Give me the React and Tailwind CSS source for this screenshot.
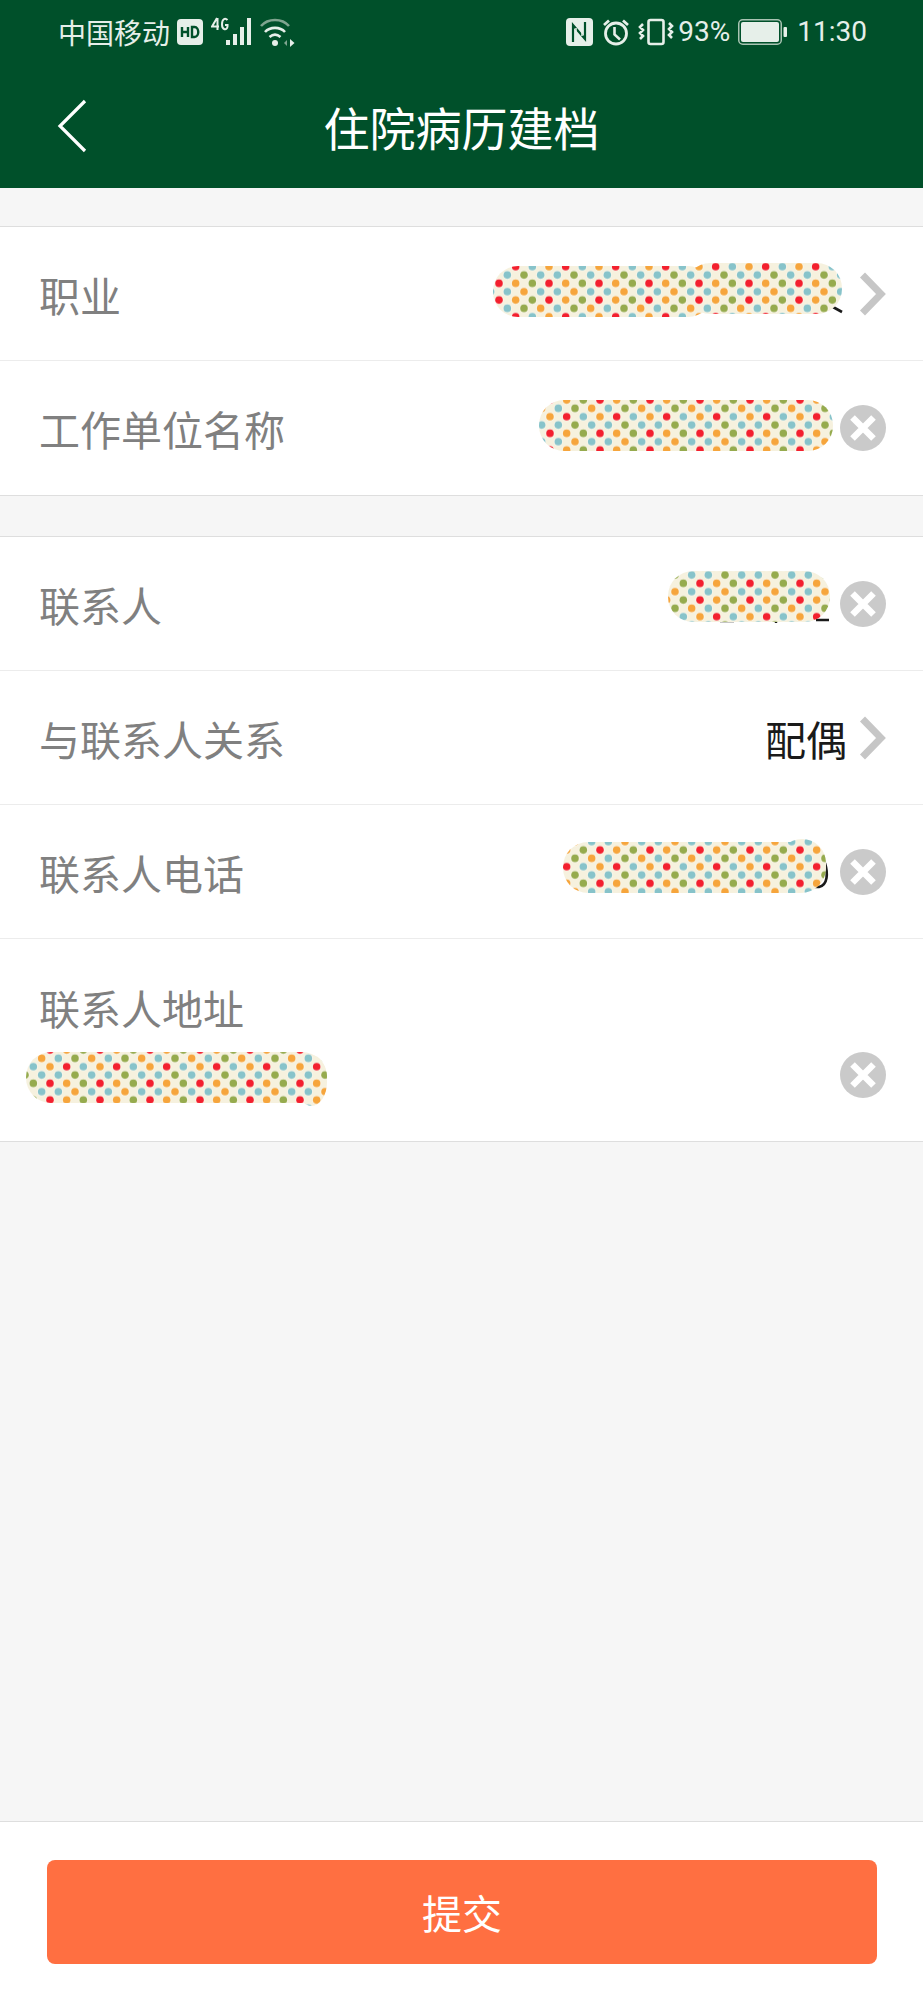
const cjk = { fontFamily: '"Noto Sans CJK SC", "Noto Sans", sans-serif' };

const C = { R: '#f3202e', O: '#f6a53c', G: '#96ab4e', B: '#87c3ca' };
const DOTS = [
  [0, 0, 'O'], [16.67, 0, 'R'], [33.33, 0, 'B'],
  [8.33, 8.33, 'B'], [25, 8.33, 'G'], [41.67, 8.33, 'B'],
  [0, 16.67, 'R'], [16.67, 16.67, 'O'], [33.33, 16.67, 'G'],
  [8.33, 25, 'B'], [25, 25, 'O'], [41.67, 25, 'B'],
  [0, 33.33, 'R'], [16.67, 33.33, 'O'], [33.33, 33.33, 'G'],
  [8.33, 41.67, 'B'], [25, 41.67, 'G'], [41.67, 41.67, 'O'],
];

// x, y = where the strip sits on the page, so that all strips share one dot grid
function Pill({ id, x, y, w, h, shapes, className, children }) {
  const tile = [];
  DOTS.forEach(([dx, dy, c]) => {
    [0, 50].forEach((ox) => {
      [0, 50].forEach((oy) => {
        tile.push(<circle key={`h${dx}-${dy}-${ox}-${oy}`} cx={dx + ox} cy={dy + oy} r="4.6" fill="#fbf8ee" />);
        tile.push(<circle key={`d${dx}-${dy}-${ox}-${oy}`} cx={dx + ox} cy={dy + oy} r="3.8" fill={C[c]} />);
      });
    });
  });
  return (
    <svg width={w} height={h} viewBox={`0 0 ${w} ${h}`} className={className}>
      <defs>
        <pattern id={id} width="50" height="50" patternUnits="userSpaceOnUse" patternTransform={`translate(${-x} ${16.67 - y})`}>
          <rect width="50" height="50" fill="#f6f1de" />
          {tile}
        </pattern>
      </defs>
      {children}
      {shapes.map((s, i) => (
        <rect key={i} x={s[0]} y={s[1]} width={s[2]} height={s[3]} rx={s[4]} fill={`url(#${id})`} />
      ))}
    </svg>
  );
}

function Chevron({ className }) {
  return (
    <svg width="27" height="44" viewBox="0 0 27 44" className={className}>
      <path d="M3.5 3 L22 22 L3.5 41" fill="none" stroke="#c6c6c6" strokeWidth="7" />
    </svg>
  );
}

function Clear({ className }) {
  return (
    <svg width="46" height="46" viewBox="0 0 46 46" className={className}>
      <circle cx="23" cy="23" r="23" fill="#cacaca" />
      <path d="M12.5 12.5 L33.5 33.5 M33.5 12.5 L12.5 33.5" stroke="#fff" strokeWidth="6.5" />
    </svg>
  );
}

function Label({ children }) {
  return <span className="text-[41px] leading-[56px] text-[#808080]" style={cjk}>{children}</span>;
}

function Row({ h, children, last }) {
  return (
    <div className={`flex justify-between items-center pl-[39px] pr-[37px] ${h} bg-white ${last ? '' : 'border-b border-[#ececec]'}`}>
      {children}
    </div>
  );
}

function StatusBar() {
  return (
    <div className="flex justify-between items-center h-[60px] pt-[4px] pl-[58px] pr-[56px] text-[#e6efe9]">
      <div className="flex items-center">
        <span className="text-[28px] leading-[34px]" style={cjk}>中国移动</span>
        <svg width="26" height="26" viewBox="0 0 26 26" className="ml-[7px]">
          <rect width="26" height="26" rx="4" fill="#e6efe9" />
          <path d="M5 8v10M11 8v10M5 13h6M15 8v10h2.5c5 0 5-10 0-10z" fill="none" stroke="#00502a" strokeWidth="2.4" />
        </svg>
        <svg width="84" height="30" viewBox="0 0 84 30" className="ml-[8px]">
          <path d="M6 1 L1 9.5 H8 M6.5 1v12" fill="none" stroke="#e6efe9" strokeWidth="2" />
          <path d="M16.5 3 C14 0.5 11 2 11 7.5 C11 13 16 14 16.5 9.5 V8 H14" fill="none" stroke="#e6efe9" strokeWidth="2" />
          <rect x="15" y="23" width="4" height="5" fill="#e6efe9" />
          <rect x="22" y="17" width="4" height="11" fill="#e6efe9" />
          <rect x="29" y="10" width="4" height="18" fill="#e6efe9" />
          <rect x="36" y="1" width="4" height="27" fill="#e6efe9" />
          <path d="M50 9 C57 1 71 1 78 9" fill="none" stroke="#7fa48f" strokeWidth="2.6" />
          <path d="M54 15 C59 9.5 69 9.5 74 15 M58.5 20 C62 17 66 17 69.5 20" fill="none" stroke="#e6efe9" strokeWidth="2.6" />
          <circle cx="64" cy="26" r="3" fill="#e6efe9" />
          <path d="M79 22 L83.5 26 L79 30z" fill="#e6efe9" />
          <path d="M73 26l3-3v6z" fill="#7fa48f" />
        </svg>
      </div>
      <div className="flex items-center">
        <svg width="27" height="28" viewBox="0 0 27 28">
          <path d="M4 0H23a4 4 0 0 1 4 4V24a4 4 0 0 1-4 4H4a4 4 0 0 1-4-4V4a4 4 0 0 1 4-4z" fill="#e6efe9" />
          <path d="M7 24V7L19 21V4" fill="none" stroke="#00502a" strokeWidth="2.2" />
          <path d="M10 10V24M16 18V4" fill="none" stroke="#e6efe9" strokeWidth="1.5" />
        </svg>
        <svg width="28" height="28" viewBox="0 0 28 28" className="ml-[9px]">
          <circle cx="14" cy="15.5" r="10.5" fill="none" stroke="#e6efe9" strokeWidth="2.8" />
          <path d="M12.5 9v7.5l5.5 5" fill="none" stroke="#e6efe9" strokeWidth="2.6" />
          <path d="M2 7 L7 2.5 M26 7 L21 2.5" stroke="#e6efe9" strokeWidth="2.8" />
        </svg>
        <svg width="36" height="28" viewBox="0 0 36 28" className="ml-[8px]">
          <rect x="10.5" y="2" width="15" height="24" rx="2" fill="none" stroke="#e6efe9" strokeWidth="2.6" />
          <path d="M5 6l-3 3 3 3-3 3 3 3-3 3M31 5l3 3-3 3 3 3-3 3 3 3" fill="none" stroke="#e6efe9" strokeWidth="2.6" />
        </svg>
        <span className="ml-[4px] text-[28px] leading-[34px]" style={{ fontFamily: 'Roboto, sans-serif' }}>93%</span>
        <svg width="50" height="26" viewBox="0 0 50 26" className="ml-[8px]">
          <rect x="0.75" y="0.75" width="42.5" height="24.5" rx="4" fill="none" stroke="#a9c4b3" strokeWidth="1.5" />
          <rect x="3" y="3" width="38" height="20" rx="2" fill="#e6efe9" />
          <rect x="45.5" y="8" width="3.5" height="10" rx="1" fill="#e6efe9" />
        </svg>
        <span className="ml-[9px] text-[28px] leading-[34px]" style={{ fontFamily: 'Roboto, sans-serif' }}>11:30</span>
      </div>
    </div>
  );
}

export default function App() {
  return (
    <div className="flex flex-col h-[2000px] w-[923px] bg-[#f6f6f6] overflow-hidden">
      <div className="h-[188px] bg-[#00502a]">
        <StatusBar />
        <div className="relative flex items-center justify-center h-[128px] text-white">
          <svg width="32" height="54" viewBox="0 0 32 54" className="absolute left-[56px] top-[39px]">
            <path d="M29 2 L4 27 L29 52" fill="none" stroke="#fff" strokeWidth="3.2" />
          </svg>
          <span className="text-[46px] leading-[60px] mt-[4px]" style={cjk}>住院病历建档</span>
        </div>
      </div>

      <div className="h-[38px]" />

      <div className="border-y border-[#dedede]">
        <Row h="h-[134px]">
          <Label>职业</Label>
          <div className="flex items-center self-stretch">
            <Pill
              id="p1" x={494} y={263} w={350} h={58}
              shapes={[[0, 3, 220, 51, 25], [192, 0, 157, 51, 25]]}
              className="self-start mt-[36px]"
            >
              <path d="M340 44 l9 5" stroke="#1a1a1a" strokeWidth="2.6" />
            </Pill>
            <Chevron className="ml-[16px]" />
          </div>
        </Row>
        <Row h="h-[134px]" last>
          <Label>工作单位名称</Label>
          <div className="flex items-center self-stretch">
            <Pill
              id="p2" x={539} y={400} w={294} h={51}
              shapes={[[0, 0, 294, 51, 25]]}
              className="self-start mt-[39px]"
            />
            <Clear className="ml-[7px]" />
          </div>
        </Row>
      </div>

      <div className="h-[40px]" />

      <div className="border-y border-[#dedede]">
        <Row h="h-[134px]">
          <Label>联系人</Label>
          <div className="flex items-center self-stretch">
            <Pill
              id="p3" x={668} y={571} w={162} h={54}
              shapes={[[0, 0, 162, 51, 25]]}
              className="self-start mt-[34px]"
            >
              <path d="M52 50h14M148 49h13M108 49v3" stroke="#1a1a1a" strokeWidth="2.4" />
            </Pill>
            <Clear className="ml-[10px]" />
          </div>
        </Row>
        <Row h="h-[134px]">
          <Label>与联系人关系</Label>
          <div className="flex items-center self-stretch">
            <span className="text-[41px] leading-[56px] text-[#1a1a1a]" style={cjk}>配偶</span>
            <Chevron className="ml-[12px]" />
          </div>
        </Row>
        <Row h="h-[134px]">
          <Label>联系人电话</Label>
          <div className="flex items-center self-stretch">
            <Pill
              id="p4" x={563} y={839} w={268} h={56}
              shapes={[[0, 3, 263, 51, 25], [215, 0, 48, 51, 24]]}
              className="self-start mt-[34px]"
            >
              <path d="M262 24 C265 34 265 46 256 48 h-6" fill="none" stroke="#1a1a1a" strokeWidth="2.6" />
            </Pill>
            <Clear className="ml-[9px]" />
          </div>
        </Row>
        <div className="bg-white h-[202px] pl-[39px] pr-[37px] pt-[40px]">
          <Label>联系人地址</Label>
          <div className="flex justify-between items-start -ml-[13px] mt-[17px]">
            <Pill
              id="p5" x={26} y={1052} w={301} h={54}
              shapes={[[0, 0, 301, 51, 25], [270, 3, 31, 51, 24]]}
            />
            <Clear />
          </div>
        </div>
      </div>

      <div className="flex-1" />

      <div className="h-[179px] bg-white border-t border-[#dedede] pt-[38px] pl-[47px] pr-[46px]">
        <button className="w-full h-[104px] rounded-[8px] bg-[#ff6f41] text-white text-[40px]" style={cjk}>提交</button>
      </div>
    </div>
  );
}
